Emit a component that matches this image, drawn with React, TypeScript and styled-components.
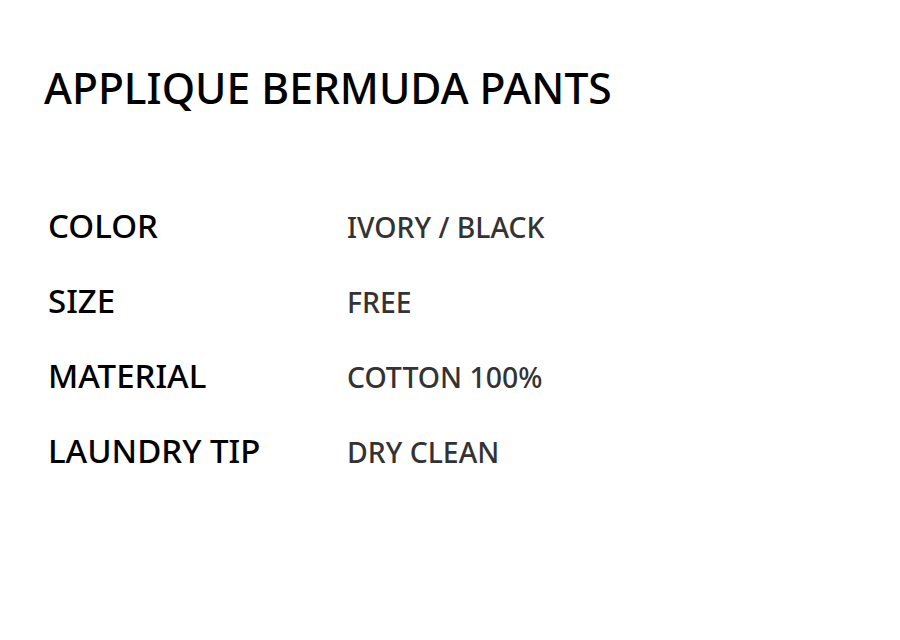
import React from "react";
import styled, { createGlobalStyle } from "styled-components";

const GlobalStyle = createGlobalStyle`
  html, body {
    margin: 0;
    padding: 0;
    background: #ffffff;
  }
  body {
    font-family: "Noto Sans", "Noto Sans CJK KR", sans-serif;
  }
`;

const Page = styled.div`
  width: 900px;
  height: 640px;
  box-sizing: border-box;
  padding: 61px 0 0 44px;
`;

const Title = styled.h1`
  margin: 0;
  font-size: 42.6px;
  font-weight: 500;
  line-height: 52px;
  color: #000;
  letter-spacing: 0;
`;

const SpecList = styled.dl`
  margin: 95px 0 0 4px;
  display: grid;
  grid-template-columns: 299px auto;
  row-gap: 38px;
  align-items: baseline;
`;

const Label = styled.dt`
  margin: 0;
  font-size: 33px;
  font-weight: 500;
  line-height: 36px;
  color: #000;
`;

const Value = styled.dd`
  margin: 0;
  font-size: 28.4px;
  font-weight: 500;
  line-height: 36px;
  color: #333;
`;

const specs = [
  { label: "COLOR", value: "IVORY / BLACK" },
  { label: "SIZE", value: "FREE" },
  { label: "MATERIAL", value: "COTTON 100%" },
  { label: "LAUNDRY TIP", value: "DRY CLEAN" },
];

function App() {
  return (
    <Page>
      <GlobalStyle />
      <Title>APPLIQUE BERMUDA PANTS</Title>
      <SpecList>
        {specs.map((s) => (
          <React.Fragment key={s.label}>
            <Label>{s.label}</Label>
            <Value>{s.value}</Value>
          </React.Fragment>
        ))}
      </SpecList>
    </Page>
  );
}
export default App;
